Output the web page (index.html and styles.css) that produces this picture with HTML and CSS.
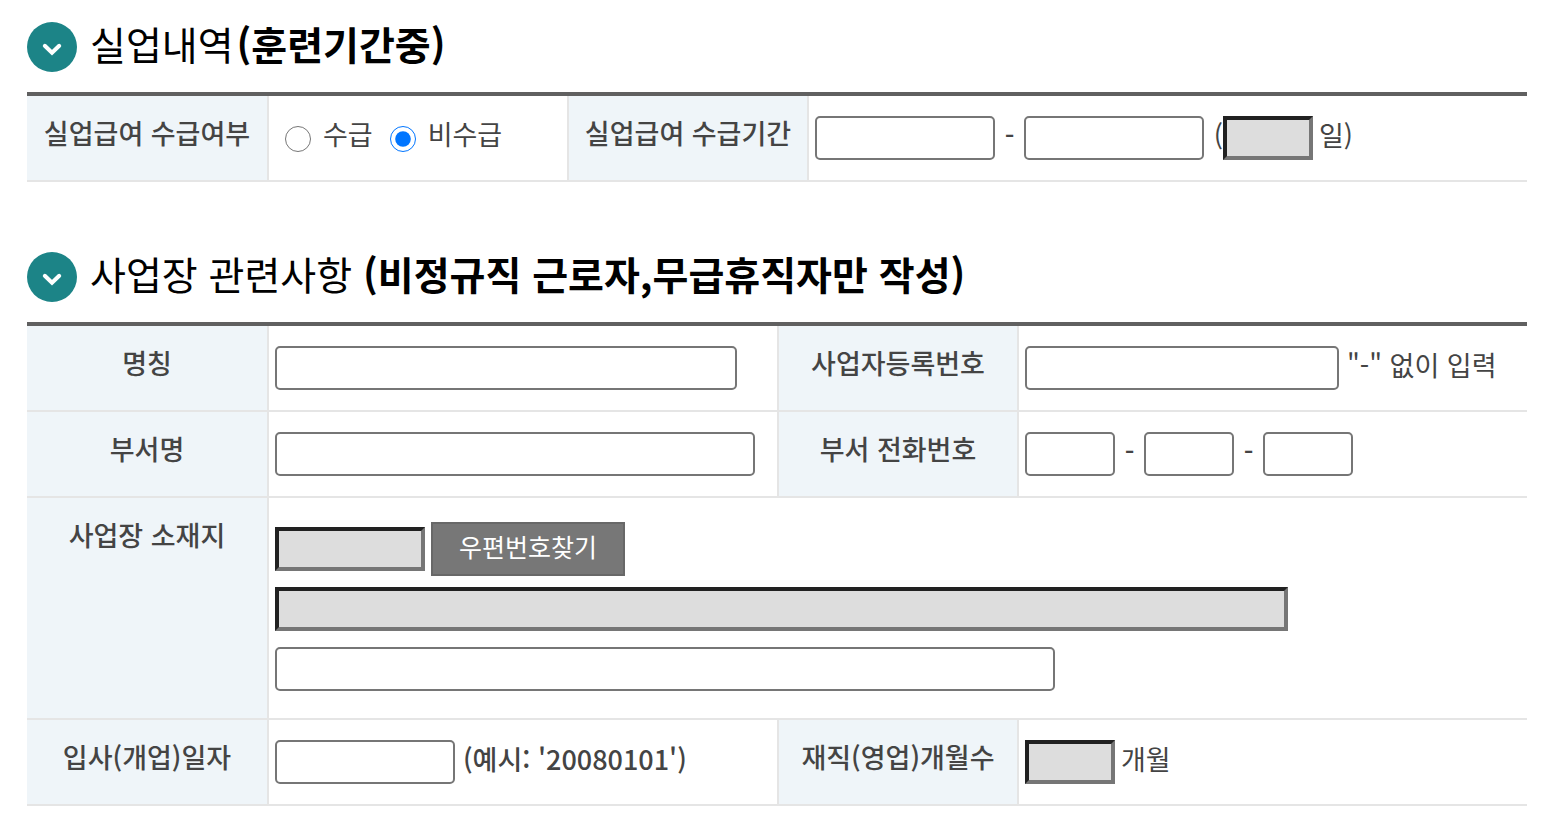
FILE: index.html
```html
<!DOCTYPE html>
<html lang="ko">
<head>
<meta charset="utf-8">
<title>실업내역 및 사업장 관련사항</title>
<link rel="stylesheet" href="styles.css">
</head>
<body>
<main class="page">
  <section class="section">
    <h2 class="title">
      <svg class="title-icon" viewBox="0 0 50 50" aria-hidden="true"><circle cx="25" cy="25" r="25"/><path d="M17.8 23.8l7.2 7 7.2-7"/></svg>
      <span>실업내역<strong class="spaced">(훈련기간중)</strong></span>
    </h2>
    <table class="form-table">
      <colgroup><col class="col-label"><col class="col-choice"><col class="col-label"><col></colgroup>
      <tr>
        <th scope="row">실업급여 수급여부</th>
        <td>
          <div class="field radios">
            <label class="radio"><input type="radio" name="benefit"><span>수급</span></label>
            <label class="radio"><input type="radio" name="benefit" checked><span>비수급</span></label>
          </div>
        </td>
        <th scope="row">실업급여 수급기간</th>
        <td>
          <div class="field">
            <input class="text w-date" type="text" aria-label="수급기간 시작일">
            <span class="dash">-</span>
            <input class="text w-date" type="text" aria-label="수급기간 종료일">
            <span class="paren">(</span>
            <input class="text readonly w-short" type="text" id="days" readonly>
            <label class="unit" for="days">일)</label>
          </div>
        </td>
      </tr>
    </table>
  </section>

  <section class="section">
    <h2 class="title">
      <svg class="title-icon" viewBox="0 0 50 50" aria-hidden="true"><circle cx="25" cy="25" r="25"/><path d="M17.8 23.8l7.2 7 7.2-7"/></svg>
      <span>사업장 관련사항 <strong>(비정규직 근로자,무급휴직자만 작성)</strong></span>
    </h2>
    <table class="form-table">
      <colgroup><col class="col-label"><col class="col-half"><col class="col-label"><col class="col-half"></colgroup>
      <tr>
        <th scope="row"><label for="name">명칭</label></th>
        <td><div class="field"><input class="text w-name" type="text" id="name"></div></td>
        <th scope="row"><label for="bizno">사업자등록번호</label></th>
        <td><div class="field"><input class="text w-bizno" type="text" id="bizno"><span class="note">"-" 없이 입력</span></div></td>
      </tr>
      <tr>
        <th scope="row"><label for="dept">부서명</label></th>
        <td><div class="field"><input class="text w-dept" type="text" id="dept"></div></td>
        <th scope="row">부서 전화번호</th>
        <td>
          <div class="field">
            <input class="text w-short" type="text" aria-label="전화번호 앞자리">
            <span class="dash">-</span>
            <input class="text w-short" type="text" aria-label="전화번호 가운데자리">
            <span class="dash">-</span>
            <input class="text w-short" type="text" aria-label="전화번호 끝자리">
          </div>
        </td>
      </tr>
      <tr>
        <th scope="row">사업장 소재지</th>
        <td colspan="3" class="address">
          <div class="field address-row">
            <input class="text readonly w-zip" type="text" aria-label="우편번호" readonly>
            <button class="zip-button" type="button">우편번호찾기</button>
          </div>
          <div class="field address-row"><input class="text readonly w-address" type="text" aria-label="주소" readonly></div>
          <div class="field address-row"><input class="text w-detail" type="text" aria-label="상세주소"></div>
        </td>
      </tr>
      <tr>
        <th scope="row"><label for="start">입사(개업)일자</label></th>
        <td><div class="field"><input class="text w-date" type="text" id="start"><span class="note example">(예시: '20080101')</span></div></td>
        <th scope="row"><label for="months">재직(영업)개월수</label></th>
        <td><div class="field"><input class="text readonly w-short" type="text" id="months" readonly><span class="unit">개월</span></div></td>
      </tr>
    </table>
  </section>
</main>
</body>
</html>
```
FILE: styles.css
```css
* { box-sizing: border-box; }

body {
  margin: 0;
  background: #fff;
  color: #444;
  font-family: "Noto Sans CJK KR", sans-serif;
  font-size: 27px;
  line-height: 36px;
}

.page {
  display: flex;
  flex-direction: column;
  gap: 70px;
  padding: 22px 23px 22px 27px;
}

.title {
  display: flex;
  align-items: center;
  gap: 13px;
  height: 50px;
  margin: 0 0 20px;
  color: #000;
  font-size: 39px;
  font-weight: 400;
  line-height: 50px;
}

.title span { margin-bottom: 8px; }
.title strong { font-weight: 700; }
.title .spaced { margin-left: 3px; }

.title-icon {
  flex: none;
  width: 50px;
  height: 50px;
}

.title-icon circle { fill: #1c8487; }

.title-icon path {
  fill: none;
  stroke: #fff;
  stroke-width: 4;
  stroke-linecap: round;
}

.form-table {
  width: 100%;
  table-layout: fixed;
  border-collapse: separate;
  border-spacing: 0;
  border-top: 4px solid #606060;
}

.col-label { width: 16%; }
.col-choice { width: 20%; }
.col-half { width: 34%; }

th, td {
  border-bottom: 2px solid #e5e5e5;
  border-left: 2px solid #e5e5e5;
  vertical-align: top;
  white-space: nowrap;
}

th {
  padding: 19px 0;
  background: #eff5f9;
  font-weight: 500;
  text-align: center;
}

th:first-child { border-left: 0; }
td { padding: 20px 6px; }
.address { padding: 21px 6px 19px; }

.field {
  display: flex;
  align-items: center;
  min-height: 44px;
}

.address-row {
  min-height: 60px;
  gap: 6px;
}

.radios {
  gap: 17px;
  padding-left: 10px;
}

.radio {
  display: flex;
  align-items: center;
  gap: 12px;
}

.radio input {
  width: 26px;
  height: 26px;
  margin: 2px 0 0;
}

.dash, .paren, .unit, .note { margin-bottom: 6px; }
.radio span { margin-bottom: 8px; }

.text {
  flex: none;
  height: 44px;
  margin: 0;
  padding: 0 8px;
  border: 2px solid #767676;
  border-radius: 5px;
  background: #fff;
  color: inherit;
  font: inherit;
}

.readonly {
  border: 4px solid;
  border-color: #212121 #767676 #767676 #212121;
  border-radius: 0;
  background: #ddd;
}

.w-short { width: 90px; }
.w-zip { width: 150px; }
.w-date { width: 180px; }
.w-bizno { width: 314px; }
.w-name { width: 462px; }
.w-dept { width: 480px; }
.w-detail { width: 780px; }
.w-address { width: 1013px; }

.dash {
  width: 29px;
  font-weight: 500;
  text-align: center;
}

.paren {
  width: 19px;
  text-align: right;
}

.unit { margin-left: 6px; }
.note { margin-left: 8px; }
.example { font-weight: 500; }

.zip-button {
  height: 54px;
  padding: 0 26px 6px;
  border: 2px solid #686868;
  border-radius: 0;
  background: #777;
  color: #fff;
  font: inherit;
  font-size: 25px;
}
```
